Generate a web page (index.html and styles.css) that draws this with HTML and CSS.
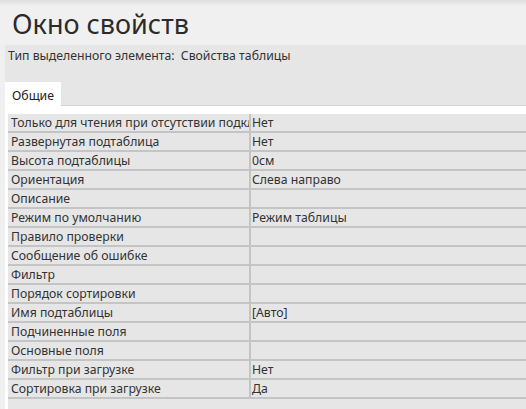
FILE: index.html
```html
<!DOCTYPE html>
<html lang="ru">
<head>
<meta charset="utf-8">
<title>Окно свойств</title>
<link rel="stylesheet" href="styles.css">
</head>
<body>
<div class="window">
  <div class="title">Окно свойств</div>
  <div class="panel">
    <div class="type-line">Тип выделенного элемента:&nbsp;&nbsp;Свойства таблицы</div>
    <div class="tabs">
      <div class="tab">Общие</div>
      <div class="tab-rest"></div>
    </div>
    <div class="content">
      <div class="grid">
        <div class="row"><div class="label">Только для чтения при отсутствии подключения</div><div class="value">Нет</div></div>
        <div class="row"><div class="label">Развернутая подтаблица</div><div class="value">Нет</div></div>
        <div class="row"><div class="label">Высота подтаблицы</div><div class="value">0см</div></div>
        <div class="row"><div class="label">Ориентация</div><div class="value">Слева направо</div></div>
        <div class="row"><div class="label">Описание</div><div class="value"></div></div>
        <div class="row"><div class="label">Режим по умолчанию</div><div class="value">Режим таблицы</div></div>
        <div class="row"><div class="label">Правило проверки</div><div class="value"></div></div>
        <div class="row"><div class="label">Сообщение об ошибке</div><div class="value"></div></div>
        <div class="row"><div class="label">Фильтр</div><div class="value"></div></div>
        <div class="row"><div class="label">Порядок сортировки</div><div class="value"></div></div>
        <div class="row"><div class="label">Имя подтаблицы</div><div class="value">[Авто]</div></div>
        <div class="row"><div class="label">Подчиненные поля</div><div class="value"></div></div>
        <div class="row"><div class="label">Основные поля</div><div class="value"></div></div>
        <div class="row"><div class="label">Фильтр при загрузке</div><div class="value">Нет</div></div>
        <div class="row"><div class="label">Сортировка при загрузке</div><div class="value">Да</div></div>
      </div>
    </div>
  </div>
</div>
</body>
</html>
```

FILE: styles.css
```css
html, body {
  margin: 0;
  padding: 0;
  height: 100%;
  overflow: hidden;
}
body {
  background: linear-gradient(to bottom, #dedede 0px, #f0f0f0 6px, #f0f0f0 100%);
  font-family: "Noto Sans", "Open Sans", sans-serif;
  color: #333;
}
.window {
  display: flex;
  flex-direction: column;
  height: 100%;
}
.title {
  height: 45px;
  box-sizing: border-box;
  padding: 7px 0 0 12px;
  font-size: 27px;
  line-height: 34px;
  color: #2b2b2b;
  white-space: nowrap;
}
.panel {
  flex: 1;
  margin-left: 5px;
  background: #e6e6e6;
  display: flex;
  flex-direction: column;
}
.type-line {
  height: 37px;
  box-sizing: border-box;
  padding: 3px 0 0 3px;
  font-size: 12.25px;
  line-height: 16px;
  white-space: nowrap;
}
.tabs {
  display: flex;
  height: 24px;
}
.tab {
  width: 56px;
  background: #fff;
  box-sizing: border-box;
  padding: 6px 0 0 7px;
  font-size: 12.25px;
  line-height: 16px;
  color: #222;
}
.tab-rest {
  flex: 1;
  border-bottom: 1px solid #d4d4d4;
}
.content {
  flex: 1;
  background: #fff;
  padding: 8px 0 0 3px;
  display: flex;
  flex-direction: column;
}
.grid {
  flex: 1;
  background: #e6e6e6;
}
.row {
  display: flex;
  height: 17px;
  border-bottom: 2px solid #c4c4c4;
  font-size: 12.25px;
  line-height: 17px;
}
.label {
  width: 243px;
  flex: none;
  padding-left: 3px;
  box-sizing: border-box;
  overflow: hidden;
  white-space: nowrap;
  border-right: 2px solid #c4c4c4;
}
.value {
  flex: 1;
  padding-left: 1px;
  white-space: nowrap;
}
```
